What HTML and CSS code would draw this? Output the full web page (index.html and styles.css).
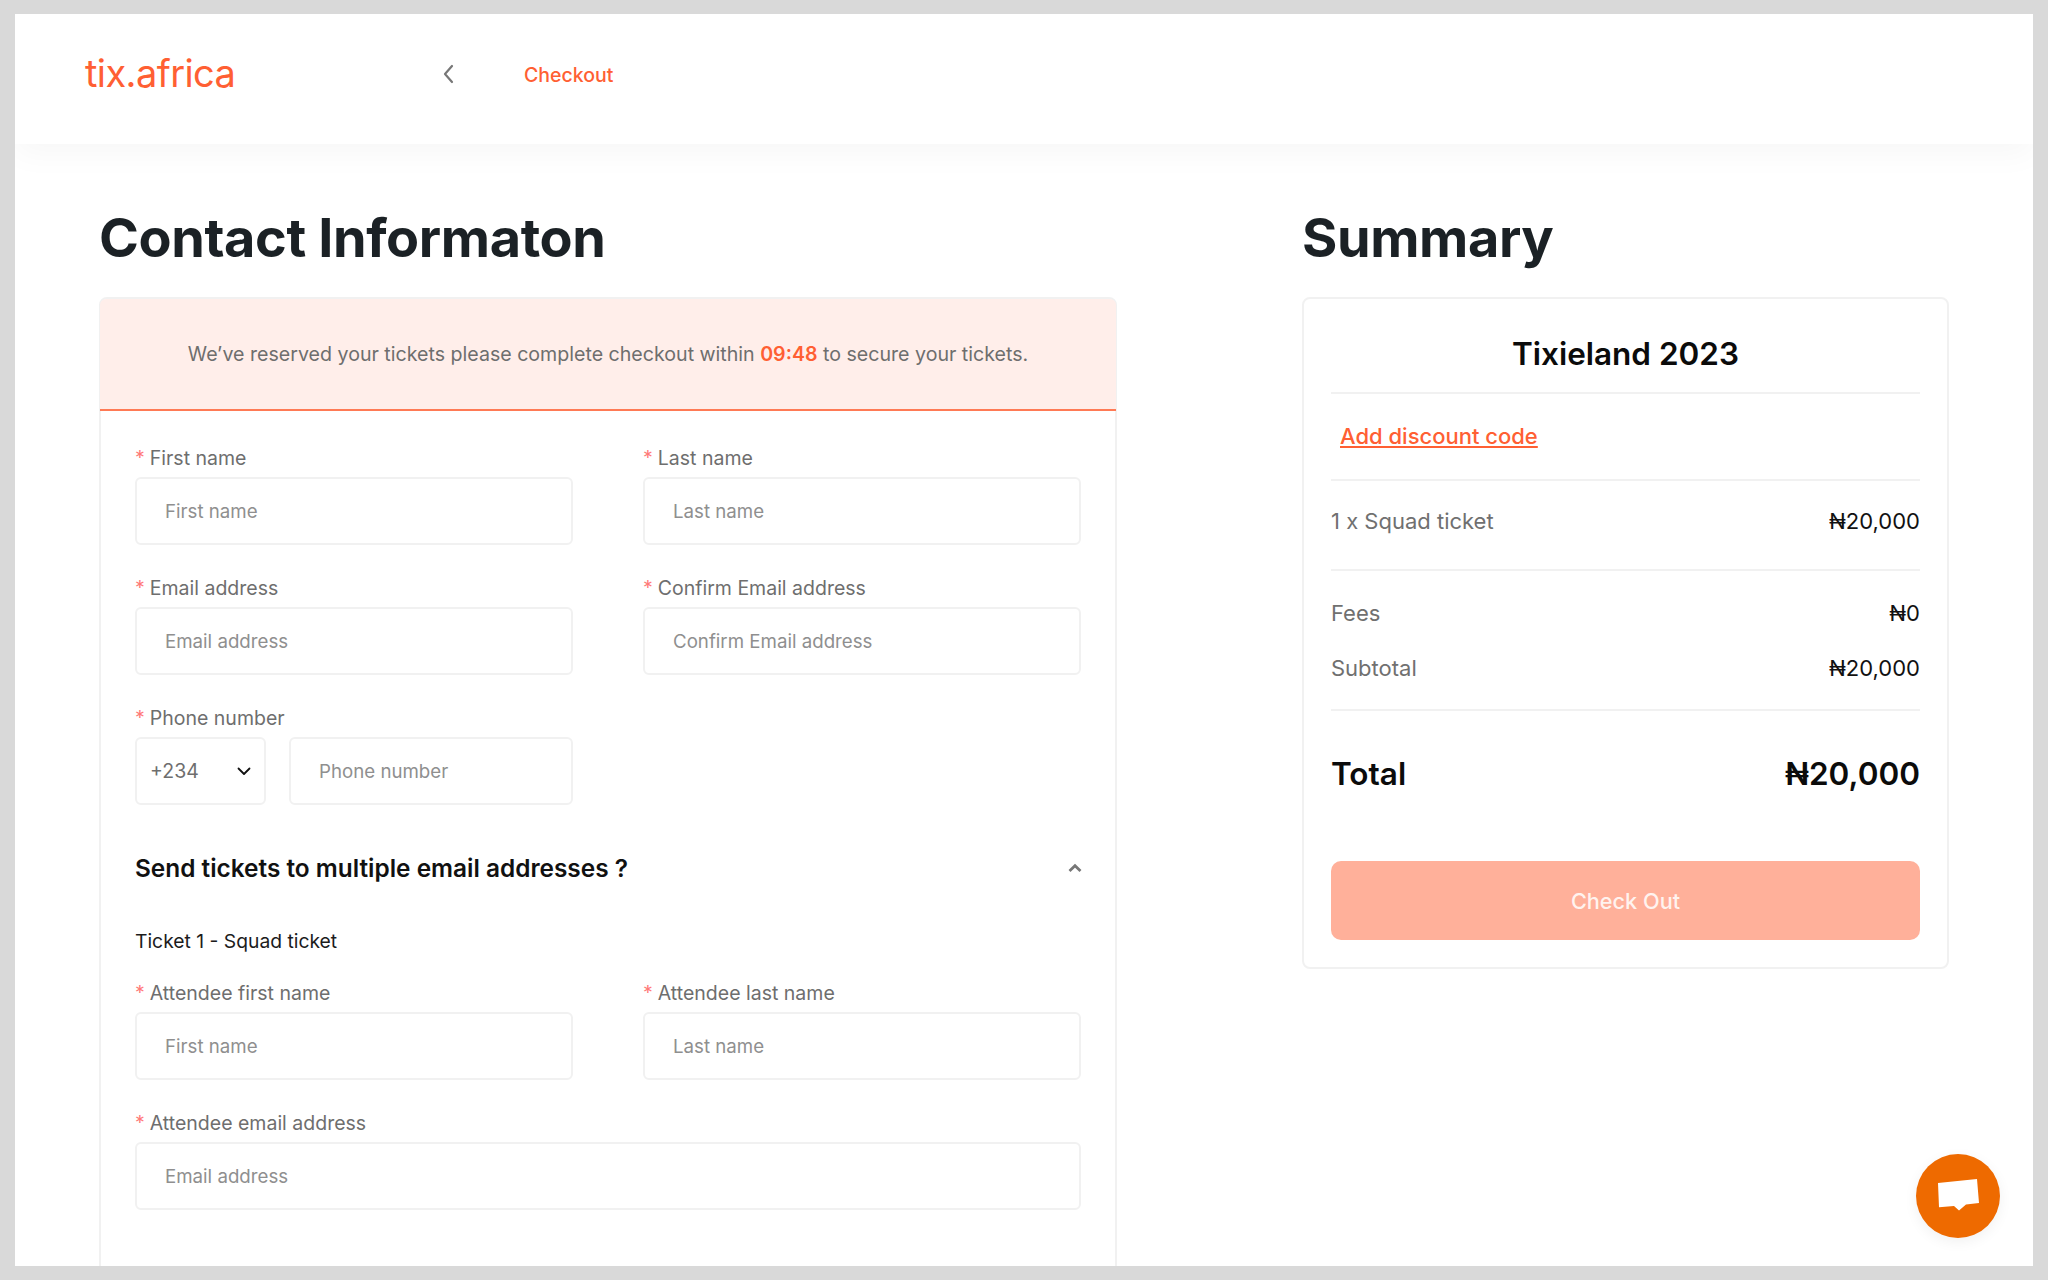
FILE: index.html
```html
<!DOCTYPE html>
<html lang="en">
<head>
<meta charset="utf-8">
<title>Checkout</title>
<link rel="stylesheet" href="styles.css">
</head>
<body>
<div class="frame">
  <header class="topbar">
    <div class="logo">tix.africa</div>
    <button class="back" aria-label="Back"><svg width="12" height="20" viewBox="0 0 12 20"><path d="M10 2 3 10l7 8" fill="none" stroke="#777" stroke-width="2.200" stroke-linecap="round" stroke-linejoin="round"/></svg></button>
    <div class="crumb">Checkout</div>
  </header>
  <main class="layout">
    <section>
      <h1 class="page-title">Contact Informaton</h1>
      <div class="card form-card">
        <div class="notice"><p class="notice-text">We’ve reserved your tickets please complete checkout within <b class="timer">09:48</b> to secure your tickets.</p></div>
        <form class="form">
          <div class="grid">
            <label class="field"><span class="label">First name</span><input class="input" placeholder="First name"></label>
            <label class="field"><span class="label">Last name</span><input class="input" placeholder="Last name"></label>
            <label class="field"><span class="label">Email address</span><input class="input" placeholder="Email address"></label>
            <label class="field"><span class="label">Confirm Email address</span><input class="input" placeholder="Confirm Email address"></label>
            <div class="field"><span class="label">Phone number</span>
              <div class="phone">
                <div class="select"><span>+234</span><svg width="16" height="10" viewBox="0 0 16 10"><path d="M2.500 2.500 8 8l5.500-5.500" fill="none" stroke="#111" stroke-width="1.800" stroke-linecap="round" stroke-linejoin="round"/></svg></div>
                <input class="input phone-input" placeholder="Phone number">
              </div>
            </div>
          </div>
          <div class="toggle">
            <h2 class="toggle-title">Send tickets to multiple email addresses ?</h2>
            <svg class="toggle-icon" width="14" height="10" viewBox="0 0 14 10"><path d="M1.500 8 7 2.800 12.500 8" fill="none" stroke="#777" stroke-width="2.800"/></svg>
          </div>
          <div class="ticket">Ticket 1 - Squad ticket</div>
          <div class="grid">
            <label class="field"><span class="label">Attendee first name</span><input class="input" placeholder="First name"></label>
            <label class="field"><span class="label">Attendee last name</span><input class="input" placeholder="Last name"></label>
            <label class="field wide"><span class="label">Attendee email address</span><input class="input" placeholder="Email address"></label>
          </div>
        </form>
      </div>
    </section>
    <aside>
      <h1 class="page-title">Summary</h1>
      <div class="card summary">
        <div class="event">Tixieland 2023</div>
        <div class="discount"><a class="discount-link" href="#">Add discount code</a></div>
        <div class="row item"><span class="muted">1 x Squad ticket</span><span>₦20,000</span></div>
        <div class="fees">
          <div class="row"><span class="muted">Fees</span><span>₦0</span></div>
          <div class="row"><span class="muted">Subtotal</span><span>₦20,000</span></div>
        </div>
        <div class="row total"><span>Total</span><span>₦20,000</span></div>
        <button class="checkout" type="button">Check Out</button>
      </div>
    </aside>
  </main>
  <button class="chat" aria-label="Chat"><svg width="42" height="36" viewBox="0 0 42 36"><path d="M1 5 40 1l2 24-13 1.500-7 6-5-4.500-15 1.300z" fill="#fff"/></svg></button>
</div>
</body>
</html>
```
FILE: styles.css
```css
* { box-sizing: border-box; }
html, body { margin: 0; height: 100%; }
body { background: #d9d9d9; font-family: Inter, "Liberation Sans", sans-serif; overflow: hidden; }
.frame { position: relative; margin: 14px 15px; height: 1252px; background: #fff; overflow: hidden; }
.topbar { display: flex; align-items: center; height: 130px; padding: 0 0 8px 70px; background: #fff; box-shadow: 0 10px 30px rgba(0,0,0,.035); position: relative; }
.logo { width: 356px; color: #ff5f33; font-size: 38px; font-weight: 400; letter-spacing: -.6px; line-height: 1; margin-top: -4px; }
.back { width: 83px; padding: 0 0 0 1px; border: 0; background: none; display: flex; margin-top: -2px; }
.crumb { color: #ff5f33; font-size: 19.500px; font-weight: 500; margin-top: -1px; }
.layout { display: grid; grid-template-columns: 1018px 647px; column-gap: 185px; padding: 59px 84px 0; }
.page-title { margin: 0 0 24px; color: #1b2125; font-size: 54px; line-height: 70px; font-weight: 700; letter-spacing: -.4px; }
.card { background: #fff; border: 2px solid #f1f1f1; border-radius: 8px; }
.form-card { height: 1100px; }
.notice { height: 112px; margin: 0 -1px; display: flex; align-items: center; justify-content: center; background: #ffeeea; border-bottom: 2px solid #ff7a55; border-radius: 6px 6px 0 0; color: #6e6e6e; font-size: 19.600px; }
.notice-text { margin: 0; }
.timer { color: #ff5f33; font-weight: 600; }
.form { padding: 35px 34px 0; }
.grid { display: grid; grid-template-columns: 438px 438px; column-gap: 70px; row-gap: 31px; }
.wide { grid-column: 1 / -1; }
.field { display: block; }
.label { display: block; height: 31px; line-height: 24px; color: #6e6e6e; font-size: 19.500px; }
.label::before { content: "*"; color: #ff7a7a; margin-right: 5px; }
.input { display: block; width: 100%; height: 68px; padding: 0 28px; border: 2px solid #f1f1f1; border-radius: 6px; background: #fff; font: 18.700px Inter, sans-serif; color: #333; outline: 0; }
.input::placeholder { color: #8f8f8f; opacity: 1; }
.phone { display: flex; gap: 23px; width: 438px; }
.select { flex: 0 0 131px; height: 68px; display: flex; align-items: center; justify-content: space-between; padding: 0 12px 0 13px; border: 2px solid #f1f1f1; border-radius: 6px; color: #6e6e6e; font-size: 19.500px; }
.phone-input { flex: 1; width: auto; min-width: 0; }
.toggle { display: flex; align-items: center; justify-content: space-between; margin-top: 47px; }
.toggle-icon { margin-right: -1px; }
.toggle-title { margin: 0; color: #111; font-size: 24.400px; line-height: 32px; font-weight: 600; }
.ticket { margin: 45px 0 28px; color: #1c1c1c; font-size: 19.300px; line-height: 24px; }
.summary { padding: 32px 27px 0; height: 672px; }
.event { height: 63px; text-align: center; color: #0b0b0b; font-size: 31.500px; line-height: 46px; font-weight: 600; border-bottom: 2px solid #f1f1f1; }
.discount { height: 87px; padding: 27px 9px 0; border-bottom: 2px solid #f1f1f1; font-size: 22px; line-height: 30px; font-weight: 500; }
.discount-link { color: #ff5f33; text-decoration: underline; }
.row { display: flex; justify-content: space-between; color: #111; font-size: 22px; line-height: 30px; }
.muted { color: #707070; }
.item { height: 90px; align-items: center; padding-bottom: 8px; border-bottom: 2px solid #f1f1f1; }
.fees { display: flex; flex-direction: column; gap: 25px; padding: 27px 0 26px; border-bottom: 2px solid #f1f1f1; }
.total { margin-top: 45px; color: #0b0b0b; font-size: 31.500px; line-height: 36px; font-weight: 600; }
.checkout { display: block; width: 100%; height: 79px; margin-top: 69px; border: 0; border-radius: 10px; background: #ffb09a; color: #fff3ef; font: 500 21.700px Inter, sans-serif; }
.chat { position: absolute; left: 1901px; top: 1140px; width: 84px; height: 84px; padding: 0; border: 0; border-radius: 50%; background: #ee6a00; box-shadow: 0 4px 14px rgba(0,0,0,.06); display: flex; align-items: center; justify-content: center; }
```
